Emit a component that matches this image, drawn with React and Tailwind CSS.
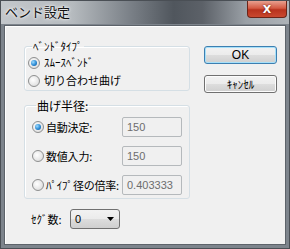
export default function App() {
  const font = { fontFamily: '"Noto Sans CJK JP", "Noto Sans", sans-serif' };
  return (
    <div className="w-[290px] h-[249px] bg-[#7d848c] border border-[#4a4f55] flex flex-col text-[#000]" style={font}>
      {/* Title bar */}
      <div className="h-[23px] flex items-start justify-between bg-[linear-gradient(90deg,#c3c7cb_0%,#b5babe_25%,#7a8087_45%,#50565d_60%,#5c6168_70%,#9aa0a6_85%,#aeb3b8_100%)]">
        <div className="pl-[4px] pt-[3px] text-[13px] leading-[15px] text-[#111] [text-shadow:0_0_4px_#fff,0_0_2px_#fff]">ベンド設定</div>
        <div className="mr-[2px] w-[40px] h-[17px] rounded-b-[4px] border border-[#6b2418] border-t-0 bg-[linear-gradient(180deg,#e8a08f_0%,#d45a43_45%,#b8321d_55%,#c9482f_100%)] flex items-center justify-center">
          <span className="text-white text-[11px] font-bold leading-none [text-shadow:0_0_2px_#5a1208]" style={{ fontFamily: '"DejaVu Sans", sans-serif' }}>X</span>
        </div>
      </div>
      {/* Content */}
      <div className="mx-[3px] mt-[1px] h-[220px] border border-[#5d636a] bg-[#f0f0f0] shadow-[inset_1px_1px_0_#ffffff] flex">
        <div className="flex flex-col pl-[19px] pt-[14px] w-[190px] text-[11px] leading-[13px]">
          {/* Group 1 */}
          <fieldset className="w-[166px] h-[51px] border border-[#d5dfe5] rounded-[3px] shadow-[inset_1px_1px_0_#fff] pl-[3px] m-0">
            <legend className="ml-[4px] px-[1px] text-[11px] leading-[12px]">ﾍﾞﾝﾄﾞﾀｲﾌﾟ</legend>
            <div className="flex flex-col gap-[5px] pt-[4px]">
              <Radio checked label="ｽﾑｰｽﾍﾞﾝﾄﾞ" />
              <Radio label="切り合わせ曲げ" />
            </div>
          </fieldset>
          {/* Group 2 */}
          <fieldset className="mt-[8px] w-[166px] h-[100px] border border-[#d5dfe5] rounded-[3px] shadow-[inset_1px_1px_0_#fff] pl-[7px] m-0">
            <legend className="ml-[4px] px-[1px] text-[12px] leading-[13px]">曲げ半径:</legend>
            <div className="flex flex-col gap-[9px] pt-[5px]">
              <Row checked label="自動決定:" value="150" />
              <Row label="数値入力:" value="150" />
              <Row label="ﾊﾟｲﾌﾟ径の倍率:" value="0.403333" />
            </div>
          </fieldset>
          {/* Seg count */}
          <div className="flex items-center mt-[10px] pl-[7px]">
            <span className="w-[39px] text-[11px]">ｾｸﾞ数:</span>
            <div className="w-[50px] h-[20px] rounded-[3px] border border-[#707070] bg-[linear-gradient(180deg,#f2f2f2_0%,#ebebeb_50%,#dddddd_51%,#cfcfcf_100%)] flex items-center justify-between pl-[4px] pr-[5px]">
              <span className="text-[11px]" style={{ fontFamily: '"Liberation Sans", sans-serif' }}>0</span>
              <svg width="7" height="4" viewBox="0 0 7 4"><path d="M0 0h7L3.5 4z" fill="#000" /></svg>
            </div>
          </div>
        </div>
        {/* Buttons */}
        <div className="flex flex-col gap-[11px] pl-[9px] pt-[20px]">
          <Button primary>
            <span className="text-[12px]" style={{ fontFamily: '"Liberation Sans", sans-serif' }}>OK</span>
          </Button>
          <Button>ｷｬﾝｾﾙ</Button>
        </div>
      </div>
    </div>
  );
}

function RadioCircle({ checked }) {
  return (
    <div className="w-[12px] h-[12px] rounded-full border border-[#8e8f8f] bg-[radial-gradient(circle_at_40%_40%,#ffffff_0%,#e6e6e6_60%,#cfcfcf_100%)] flex items-center justify-center shrink-0">
      {checked && (
        <div className="w-[6px] h-[6px] rounded-full bg-[radial-gradient(circle_at_35%_35%,#9fdcff_0%,#2a8ad4_55%,#0f4f8f_100%)]" />
      )}
    </div>
  );
}

function Radio({ checked, label }) {
  return (
    <div className="flex items-center gap-[4px] h-[13px]">
      <RadioCircle checked={checked} />
      <span className="text-[11px] leading-[13px]">{label}</span>
    </div>
  );
}

function Row({ checked, label, value }) {
  return (
    <div className="flex items-center h-[20px]">
      <div className="flex items-center gap-[2px] w-[90px] overflow-visible">
        <RadioCircle checked={checked} />
        <span className="text-[11px] leading-[13px] whitespace-nowrap tracking-[-0.2px]">{label}</span>
      </div>
      <div className="w-[60px] h-[20px] border border-[#b5b9bc] rounded-[2px] bg-[#f0f0f0] flex items-center pl-[4px] text-[11px] text-[#6d6d6d]" style={{ fontFamily: '"Liberation Sans Narrow", "Liberation Sans", sans-serif' }}>
        {value}
      </div>
    </div>
  );
}

function Button({ primary, children }) {
  return (
    <div className={`w-[73px] h-[18px] rounded-[3px] border ${primary ? 'border-[#3c7fb1] shadow-[inset_0_0_0_1px_#a7e0f9]' : 'border-[#707070] shadow-[inset_0_0_0_1px_#fcfcfc]'} bg-[linear-gradient(180deg,#f2f2f2_0%,#ebebeb_50%,#dddddd_51%,#cfcfcf_100%)] flex items-center justify-center text-[11px] leading-none`}>
      {children}
    </div>
  );
}
